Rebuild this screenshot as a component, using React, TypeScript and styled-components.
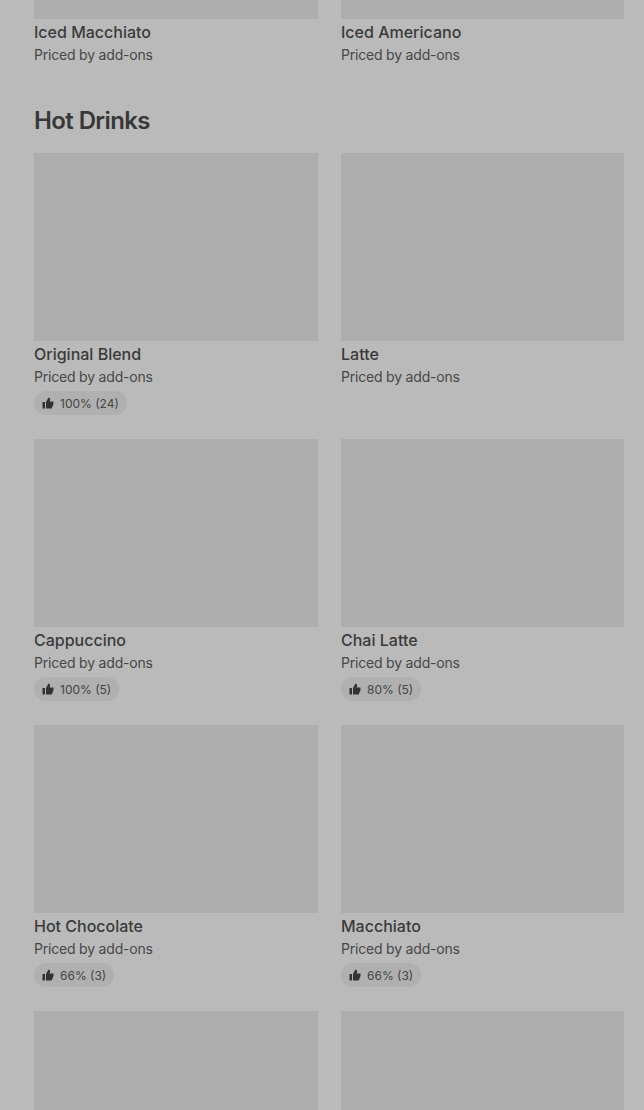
import styled, { createGlobalStyle } from 'styled-components'

const GlobalStyle = createGlobalStyle`
  html, body {
    margin: 0;
    padding: 0;
    height: 1110px;
    overflow: hidden;
    background: #bababa;
  }
  * { box-sizing: border-box; }
`

const Page = styled.main`
  height: 1110px;
  overflow: hidden;
  padding: 0 20px 0 34px;
  background: #bababa;
  color: #3a3a3a;
  font-family: Inter, 'Liberation Sans', sans-serif;
`

const Grid = styled.div`
  display: grid;
  grid-template-columns: 284px 283px;
  column-gap: 23px;
  row-gap: 24px;
  align-items: start;
`

const Heading = styled.h2`
  margin: 40px 0 16px;
  font-size: 24px;
  line-height: 32px;
  font-weight: 600;
  letter-spacing: -0.6px;
  color: #383838;
`

const Card = styled.article`
  display: flex;
  flex-direction: column;
  min-height: 262px;
`

const TopCard = styled(Card)`
  min-height: 0;
`

const Photo = styled.div<{ $height: number }>`
  height: ${(p) => p.$height}px;
  background: #adadad;
`

const Name = styled.h3`
  margin: 3px 0 0;
  font-size: 16px;
  line-height: 20px;
  font-weight: 500;
  color: #3a3a3a;
`

const Price = styled.p`
  margin: 3px 0 0;
  font-size: 14px;
  line-height: 20px;
  font-weight: 400;
  letter-spacing: -0.2px;
  color: #474747;
`

const Rating = styled.div`
  display: inline-flex;
  align-self: flex-start;
  align-items: center;
  gap: 6px;
  height: 24px;
  margin-top: 4px;
  padding: 0 8px;
  border-radius: 12px;
  background: #b0b0b0;
  font-size: 12px;
  color: #444444;
`

const Thumb = () => (
  <svg width="12" height="12" viewBox="0 0 24 24" fill="#333333" aria-hidden="true">
    <path d="M1 10h5v13H1zM8 23V10l5-9 2 1c1 .6 1.4 1.6 1.2 2.7L15.4 9H23v5l-3.6 9z" />
  </svg>
)

const topDrinks = ['Iced Macchiato', 'Iced Americano']

const hotDrinks = [
  { name: 'Original Blend', rating: '100% (24)' },
  { name: 'Latte' },
  { name: 'Cappuccino', rating: '100% (5)' },
  { name: 'Chai Latte', rating: '80% (5)' },
  { name: 'Hot Chocolate', rating: '66% (3)' },
  { name: 'Macchiato', rating: '66% (3)' },
  { name: 'Mocha' },
  { name: 'Flat White' },
]

const App = () => (
  <>
    <GlobalStyle />
    <Page>
      <Grid>
        {topDrinks.map((name) => (
          <TopCard key={name}>
            <Photo $height={19} />
            <Name>{name}</Name>
            <Price>Priced by add-ons</Price>
          </TopCard>
        ))}
      </Grid>
      <Heading>Hot Drinks</Heading>
      <Grid>
        {hotDrinks.map((item) => (
          <Card key={item.name}>
            <Photo $height={188} />
            <Name>{item.name}</Name>
            <Price>Priced by add-ons</Price>
            {item.rating && (
              <Rating>
                <Thumb />
                {item.rating}
              </Rating>
            )}
          </Card>
        ))}
      </Grid>
    </Page>
  </>
)

export default App
